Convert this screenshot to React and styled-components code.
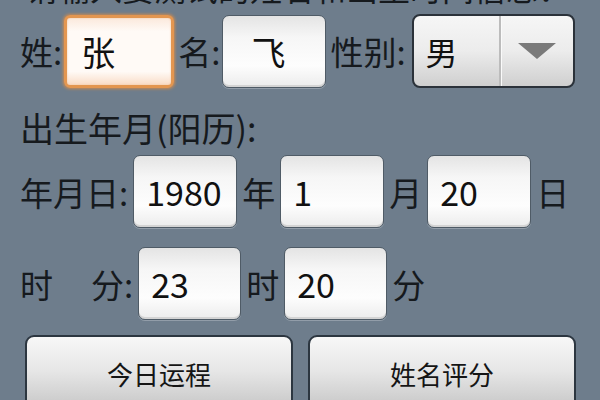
import React from 'react';
import styled, { createGlobalStyle } from 'styled-components';

const GlobalStyle = createGlobalStyle`
  html, body {
    margin: 0;
    padding: 0;
    background: #6e7d8c;
    overflow: hidden;
  }
  body {
    font-family: "Noto Sans CJK SC", "Noto Sans", sans-serif;
    color: #161a1e;
  }
`;

const Screen = styled.div`
  width: 600px;
  height: 400px;
  overflow: hidden;
  display: flex;
  flex-direction: column;
  padding-left: 20px;
  box-sizing: border-box;
`;

// previous line of the form, scrolled mostly out of view
const TopLine = styled.div`
  height: 36px;
  margin-top: -31px;
  padding-left: 6px;
  font-size: 32px;
  line-height: 36px;
  white-space: nowrap;
`;

const Row = styled.div`
  display: flex;
  align-items: center;
  gap: ${p => p.$gap || 4}px;
  margin-top: ${p => p.$top || 0}px;
`;

const Label = styled.span`
  font-size: 33px;
  line-height: 40px;
  white-space: nowrap;
  margin-left: ${p => p.$ml || 0}px;
`;

const Heading = styled.div`
  font-size: 34px;
  line-height: 40px;
  margin-top: 20px;
`;

const Field = styled.div`
  width: ${p => p.$w}px;
  height: 73px;
  box-sizing: border-box;
  display: flex;
  align-items: center;
  padding-left: ${p => p.$pl || 12}px;
  font-size: 34px;
  color: #111;
  border-radius: 7px;
  border: 1px solid #4f5b66;
  background: linear-gradient(#e4e4e4 0%, #f6f6f6 30%, #fdfdfd 70%, #ececec 100%);
  box-shadow: inset 0 -2px 0 #d4d4d4, 0 1px 0 rgba(255,255,255,0.25);
`;

const FocusField = styled(Field)`
  border: 3px solid #e39650;
  border-radius: 6px;
  background: linear-gradient(#fbe9dc 0%, #fffaf6 20%, #fffaf6 80%, #f9dcc6 100%);
  box-shadow: 0 0 3px 1px #c98a52, inset 0 0 2px #f0c09a;
`;

const Select = styled.div`
  width: 163px;
  height: 74px;
  margin-left: 4px;
  box-sizing: border-box;
  display: flex;
  border: 2px solid #2b323a;
  border-radius: 8px;
  background: linear-gradient(#f6f6f6 0%, #ececec 50%, #cfcfcf 100%);
  overflow: hidden;
`;

const SelectValue = styled.div`
  width: 87px;
  display: flex;
  align-items: center;
  padding-left: 12px;
  box-sizing: border-box;
  font-size: 32px;
  color: #111;
  border-right: 2px solid #bcbcbc;
`;

const SelectArrow = styled.div`
  flex: 1;
  display: flex;
  align-items: center;
  justify-content: center;
  border-left: 1px solid #fafafa;
`;

const ButtonBar = styled.div`
  display: grid;
  grid-template-columns: 268px 268px;
  gap: 15px;
  margin-top: 15px;
  margin-left: 5px;
`;

const Button = styled.div`
  height: 80px;
  box-sizing: border-box;
  border: 2px solid #2c3640;
  border-radius: 9px;
  background: linear-gradient(#f7f7f7 0%, #e6e6e6 45%, #c3c3c3 100%);
  display: flex;
  justify-content: center;
  padding-top: 18px;
  font-size: 26px;
  color: #151515;
`;

export default function App() {
  return (
    <>
      <GlobalStyle />
      <Screen>
        <TopLine>请输入要测试的姓名和出生时间信息：</TopLine>
        <Row $top={9} $gap={2}>
          <Label>姓:</Label>
          <FocusField $w={110} $pl={14}>张</FocusField>
          <Label $ml={2}>名:</Label>
          <Field $w={104} $pl={28}>飞</Field>
          <Label $ml={2}>性别:</Label>
          <Select>
            <SelectValue>男</SelectValue>
            <SelectArrow>
              <svg width="38" height="16" viewBox="0 0 38 16">
                <polygon points="0,0 38,0 19,16" fill="#7a7a7a" />
              </svg>
            </SelectArrow>
          </Select>
        </Row>
        <Heading>出生年月(阳历):</Heading>
        <Row $top={7} $gap={5}>
          <Label>年月日:</Label>
          <Field $w={104}>1980</Field>
          <Label>年</Label>
          <Field $w={104}>1</Field>
          <Label>月</Label>
          <Field $w={104}>20</Field>
          <Label>日</Label>
        </Row>
        <Row $top={19} $gap={5}>
          <Label>时</Label>
          <Label $ml={33}>分:</Label>
          <Field $w={103}>23</Field>
          <Label>时</Label>
          <Field $w={103}>20</Field>
          <Label>分</Label>
        </Row>
        <ButtonBar>
          <Button>今日运程</Button>
          <Button>姓名评分</Button>
        </ButtonBar>
      </Screen>
    </>
  );
}
